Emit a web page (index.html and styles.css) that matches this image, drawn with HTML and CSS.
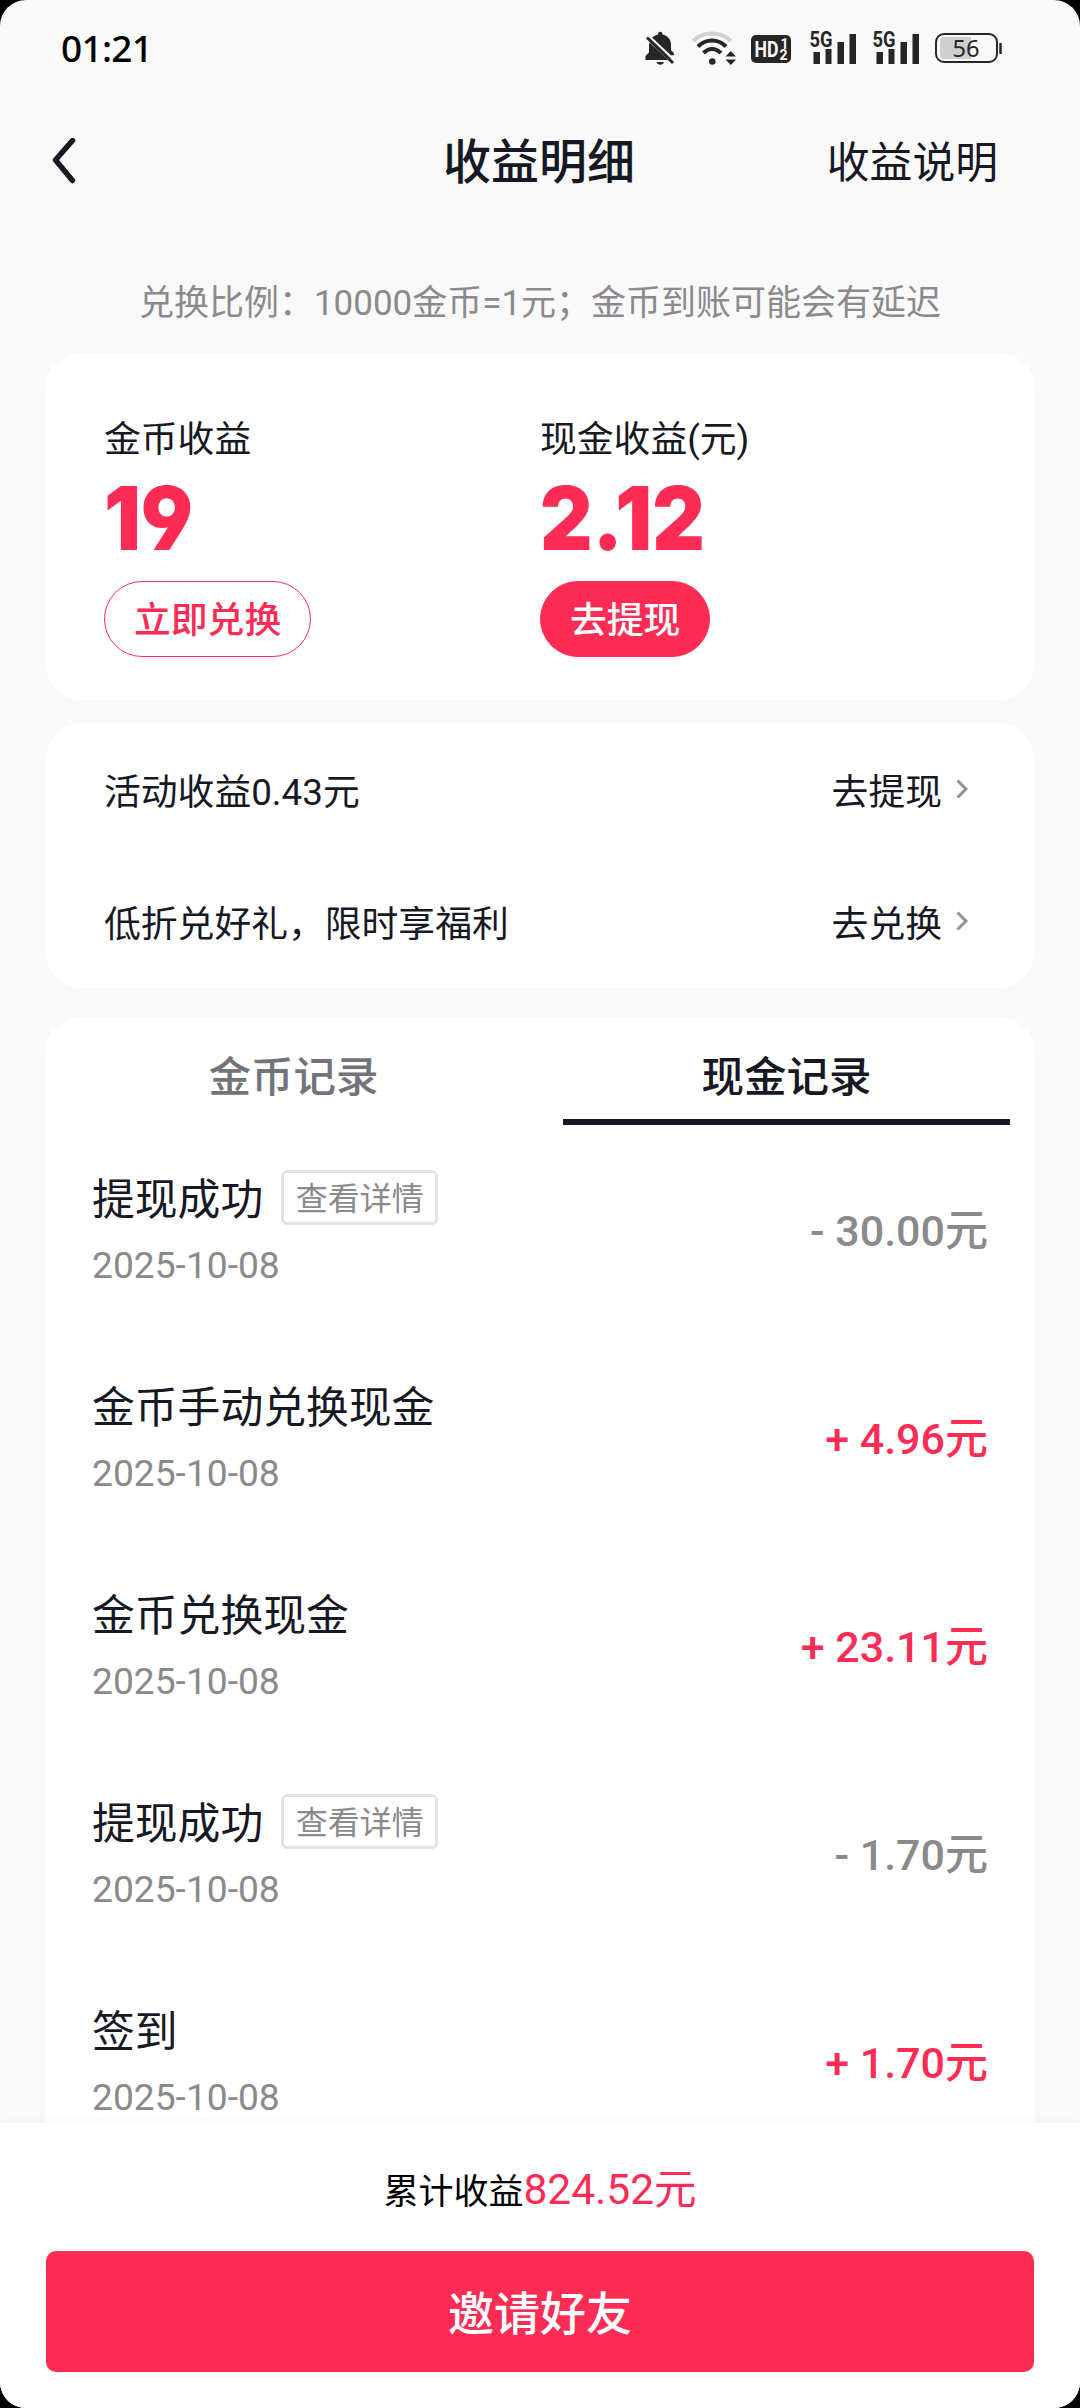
FILE: index.html
```html
<!DOCTYPE html>
<html lang="zh-CN">
<head>
<meta charset="utf-8">
<title>收益明细</title>
<link rel="stylesheet" href="styles.css">
</head>
<body>
<div class="screen">
  <header class="status">
    <span class="clock">01:21</span>
    <div class="status-icons">
      <svg class="bell" width="30" height="33" viewBox="0 0 30 33">
        <path d="M5.500 7.500 26 26.800V23.500L29 23C29.500 21 28 19.800 26 18.500V13C26 7 22.500 3.500 17.500 2.500V2a2.200 2.200 0 0 0-4.400 0v.5C10.500 3 8 4.500 6.500 6.500z" fill="#262626"/>
        <path d="M4.500 10.500C4 12 4 13 4 14v6.500L.5 24v4H23z" fill="#262626"/>
        <path d="M11.500 30h7.500c-1 3.600-6.500 3.600-7.500 0z" fill="#262626"/>
        <path d="M2 5.500 28 31" stroke="#262626" stroke-width="3"/>
        <path d="M4.500 4.500 30 28.500" stroke="#f9f9f9" stroke-width="2"/>
      </svg>
      <svg class="wifi" width="44" height="33" viewBox="0 0 44 33">
        <path d="M1 9C11-1 29-1 39 9" fill="none" stroke="#d2d2d2" stroke-width="4"/>
        <path d="M6 14.500C14 6.500 26 6.500 34 14.500" fill="none" stroke="#262626" stroke-width="4"/>
        <path d="M11.500 21C16.500 15.500 23.500 15.500 29 21" fill="none" stroke="#262626" stroke-width="4"/>
        <circle cx="20.300" cy="29.500" r="3.300" fill="#262626"/>
        <path d="M33.500 24.500 38.800 19l5.200 5.500zM33.500 27.500h10.500L38.800 33z" fill="#262626"/>
      </svg>
      <svg class="hd" width="40" height="28" viewBox="0 0 40 28">
        <rect width="40" height="28" rx="5" fill="#262626"/>
        <text x="3.500" y="21.500" class="hd-main" textLength="24" lengthAdjust="spacingAndGlyphs">HD</text>
        <text x="29.500" y="13.500" class="hd-sub">1</text>
        <text x="28.500" y="25" class="hd-sub">2</text>
      </svg>
      <svg class="signal" width="46" height="34" viewBox="0 -2 46 34">
        <text x="-0.500" y="15" class="net" textLength="23" lengthAdjust="spacingAndGlyphs">5G</text>
        <path d="M3.500 20h6.500v12H3.500zM15.500 17h6v15h-6zM27.500 10h6.500v22h-6.500zM39.500 2h6.500v30h-6.500z" fill="#262626"/>
      </svg>
      <svg class="signal" width="46" height="34" viewBox="0 -2 46 34">
        <text x="-0.500" y="15" class="net" textLength="23" lengthAdjust="spacingAndGlyphs">5G</text>
        <path d="M3.500 20h6.500v12H3.500zM15.500 17h6v15h-6zM27.500 10h6.500v22h-6.500zM39.500 2h6.500v30h-6.500z" fill="#262626"/>
      </svg>
      <svg class="battery" width="67" height="30" viewBox="0 0 67 30">
        <rect x="1" y="1" width="61" height="28" rx="8" fill="#f9f9f9" stroke="#262626" stroke-width="2"/>
        <path d="M10 4H36V26H10Q5 26 5 21V9Q5 4 10 4z" fill="#cfcfcf"/>
        <path d="M65.500 10v11" stroke="#262626" stroke-width="2.500"/>
        <text x="17.500" y="23.500" class="level" textLength="27" lengthAdjust="spacingAndGlyphs">56</text>
      </svg>
    </div>
  </header>

  <nav class="nav">
    <svg class="back" width="24" height="46" viewBox="0 0 24 46"><path d="M20.500 2.500 3.500 22 20.500 42.500" fill="none" stroke="#161823" stroke-width="5.500" stroke-linecap="round" stroke-linejoin="round"/></svg>
    <h1 class="title">收益明细</h1>
    <a class="nav-link">收益说明</a>
  </nav>

  <p class="notice">兑换比例：10000金币=1元；金币到账可能会有延迟</p>

  <main class="content">
    <section class="card balance">
      <div class="account">
        <span class="label">金币收益</span>
        <strong class="figure">19</strong>
        <button class="pill outline">立即兑换</button>
      </div>
      <div class="account">
        <span class="label">现金收益(元)</span>
        <strong class="figure">2.12</strong>
        <button class="pill solid">去提现</button>
      </div>
    </section>

    <section class="card links">
      <div class="link-row"><span>活动收益0.43元</span><a class="go">去提现<svg width="12" height="20" viewBox="0 0 12 20"><path d="M1.500 1.500 10 10 1.500 18.500" fill="none" stroke="#8f9095" stroke-width="3"/></svg></a></div>
      <div class="link-row"><span>低折兑好礼，限时享福利</span><a class="go">去兑换<svg width="12" height="20" viewBox="0 0 12 20"><path d="M1.500 1.500 10 10 1.500 18.500" fill="none" stroke="#8f9095" stroke-width="3"/></svg></a></div>
    </section>

    <section class="card records">
      <div class="tabs">
        <div class="tab">金币记录</div>
        <div class="tab active">现金记录</div>
      </div>
      <ul class="list">
        <li class="record">
          <div class="info"><div class="name">提现成功<span class="tag">查看详情</span></div><div class="date">2025-10-08</div></div>
          <div class="amount">- 30.00元</div>
        </li>
        <li class="record">
          <div class="info"><div class="name">金币手动兑换现金</div><div class="date">2025-10-08</div></div>
          <div class="amount income">+ 4.96元</div>
        </li>
        <li class="record">
          <div class="info"><div class="name">金币兑换现金</div><div class="date">2025-10-08</div></div>
          <div class="amount income">+ 23.11元</div>
        </li>
        <li class="record">
          <div class="info"><div class="name">提现成功<span class="tag">查看详情</span></div><div class="date">2025-10-08</div></div>
          <div class="amount">- 1.70元</div>
        </li>
        <li class="record">
          <div class="info"><div class="name">签到</div><div class="date">2025-10-08</div></div>
          <div class="amount income">+ 1.70元</div>
        </li>
      </ul>
    </section>
  </main>

  <footer class="footer">
    <div class="total">累计收益<span class="sum">824.52元</span></div>
    <button class="invite">邀请好友</button>
  </footer>
</div>
</body>
</html>
```

FILE: styles.css
```css
* { box-sizing: border-box; margin: 0; padding: 0; }

body {
  background: #000;
  font-family: Roboto, "Noto Sans CJK SC", sans-serif;
  color: #161823;
}

button { font-family: inherit; }

.screen {
  width: 1080px;
  height: 2408px;
  display: flex;
  flex-direction: column;
  overflow: hidden;
  border-radius: 26px;
  background: #f9f9f9;
}

/* status bar */
.status {
  flex: none;
  height: 96px;
  padding: 0 78px 0 61px;
  display: flex;
  justify-content: space-between;
  align-items: center;
}
.status svg { overflow: visible; }
.clock {
  font-family: "Noto Sans", sans-serif;
  font-size: 37px;
  font-weight: 500;
  line-height: 48px;
  letter-spacing: -.7px;
  color: #000;
}
.status-icons { display: flex; align-items: center; }
.wifi { margin-left: 17px; }
.hd { margin-left: 15px; margin-top: 2px; }
.signal { margin-left: 19px; margin-top: -2px; }
.signal + .signal { margin-left: 17px; }
.battery { margin-left: 16px; }
.hd-main { font: 700 22px Roboto, sans-serif; fill: #f9f9f9; }
.hd-sub { font: 700 14px Roboto, sans-serif; fill: #f9f9f9; }
.net { font: 700 22px Roboto, sans-serif; fill: #262626; }
.level { font: 400 24px "Noto Sans", sans-serif; fill: #262626; }

/* title bar */
.nav {
  flex: none;
  height: 132px;
  padding: 0 82px 0 52px;
  display: grid;
  grid-template-columns: 1fr auto 1fr;
  align-items: center;
}
.back { margin-top: -2px; }
.title { font-size: 48px; font-weight: 500; line-height: 64px; margin-left: 28px; padding-top: 1px; }
.nav-link { font-size: 42.800px; line-height: 64px; justify-self: end; padding-top: 1px; }

.notice {
  flex: none;
  height: 125px;
  padding-top: 51px;
  font-size: 35px;
  line-height: 50px;
  text-align: center;
  color: #8a8a8c;
}

/* cards */
.content {
  flex: 1;
  min-height: 0;
  overflow: hidden;
  padding: 0 46px;
  display: flex;
  flex-direction: column;
}
.card { flex: none; background: #fff; border-radius: 35px; }

.balance {
  height: 347px;
  padding: 61px 58px 0;
  display: grid;
  grid-template-columns: 436px 1fr;
}
.account { display: flex; flex-direction: column; align-items: flex-start; }
.label { font-size: 36.800px; line-height: 52px; }
.figure {
  font-family: Inter, sans-serif;
  font-size: 88px;
  font-weight: 900;
  line-height: 90px;
  height: 115px;
  padding-top: 7px;
  color: #fe2c55;
  font-feature-settings: "cv04";
  transform: scaleX(.925);
  transform-origin: left;
}
.pill {
  height: 76px;
  padding: 2px 29px 0;
  border: 1px solid #fe2c55;
  border-radius: 38px;
  font-size: 36.800px;
  font-weight: 500;
  line-height: 74px;
}
.outline { background: #fff; color: #fe2c55; }
.solid { background: #fe2c55; color: #fff; }

.links { margin-top: 23px; height: 265px; padding: 0 66px 0 58px; }
.link-row {
  height: 132px;
  display: flex;
  justify-content: space-between;
  align-items: center;
  font-size: 36.800px;
}
.go { display: flex; align-items: center; gap: 14px; }

.records { margin-top: 29px; padding: 0 24px; }
.tabs { display: grid; grid-template-columns: 447px 447px; justify-content: space-between; height: 108px; }
.tab {
  padding-top: 29px;
  border-bottom: 6px solid transparent;
  font-size: 42.500px;
  font-weight: 500;
  line-height: 64px;
  text-align: center;
  color: #737479;
}
.active { color: #161823; border-color: #161823; }

.list { list-style: none; padding: 40px 22px 0; }
.record { height: 208px; display: flex; justify-content: space-between; align-items: flex-start; }
.name { display: flex; align-items: center; height: 62px; font-size: 42.800px; }
.tag {
  margin-left: 18px;
  margin-top: 2px;
  width: 157px;
  height: 55px;
  border: 3px solid #e3e3e4;
  border-radius: 6px;
  font-size: 32px;
  line-height: 52px;
  text-align: center;
  color: #8a8a8c;
}
.date { font-size: 37.200px; line-height: 52px; margin-top: 12px; color: #8a8a8c; }
.amount { margin-top: 34px; font-size: 43px; font-weight: 500; line-height: 64px; color: #8a8a8c; }
.income { color: #fe2c55; }

/* bottom bar */
.footer {
  flex: none;
  position: relative;
  height: 285px;
  padding: 35px 46px 0;
  background: #fff;
  box-shadow: 0 0 12px rgba(0, 0, 0, .04);
}
.total { height: 93px; font-size: 35px; line-height: 64px; text-align: center; color: #000; }
.sum { font-size: 42.500px; color: #fe2c55; }
.invite {
  display: block;
  width: 100%;
  height: 121px;
  padding-bottom: 3px;
  border: 0;
  border-radius: 10px;
  background: #fe2c55;
  color: #fff;
  font-size: 46px;
  font-weight: 500;
}
```
